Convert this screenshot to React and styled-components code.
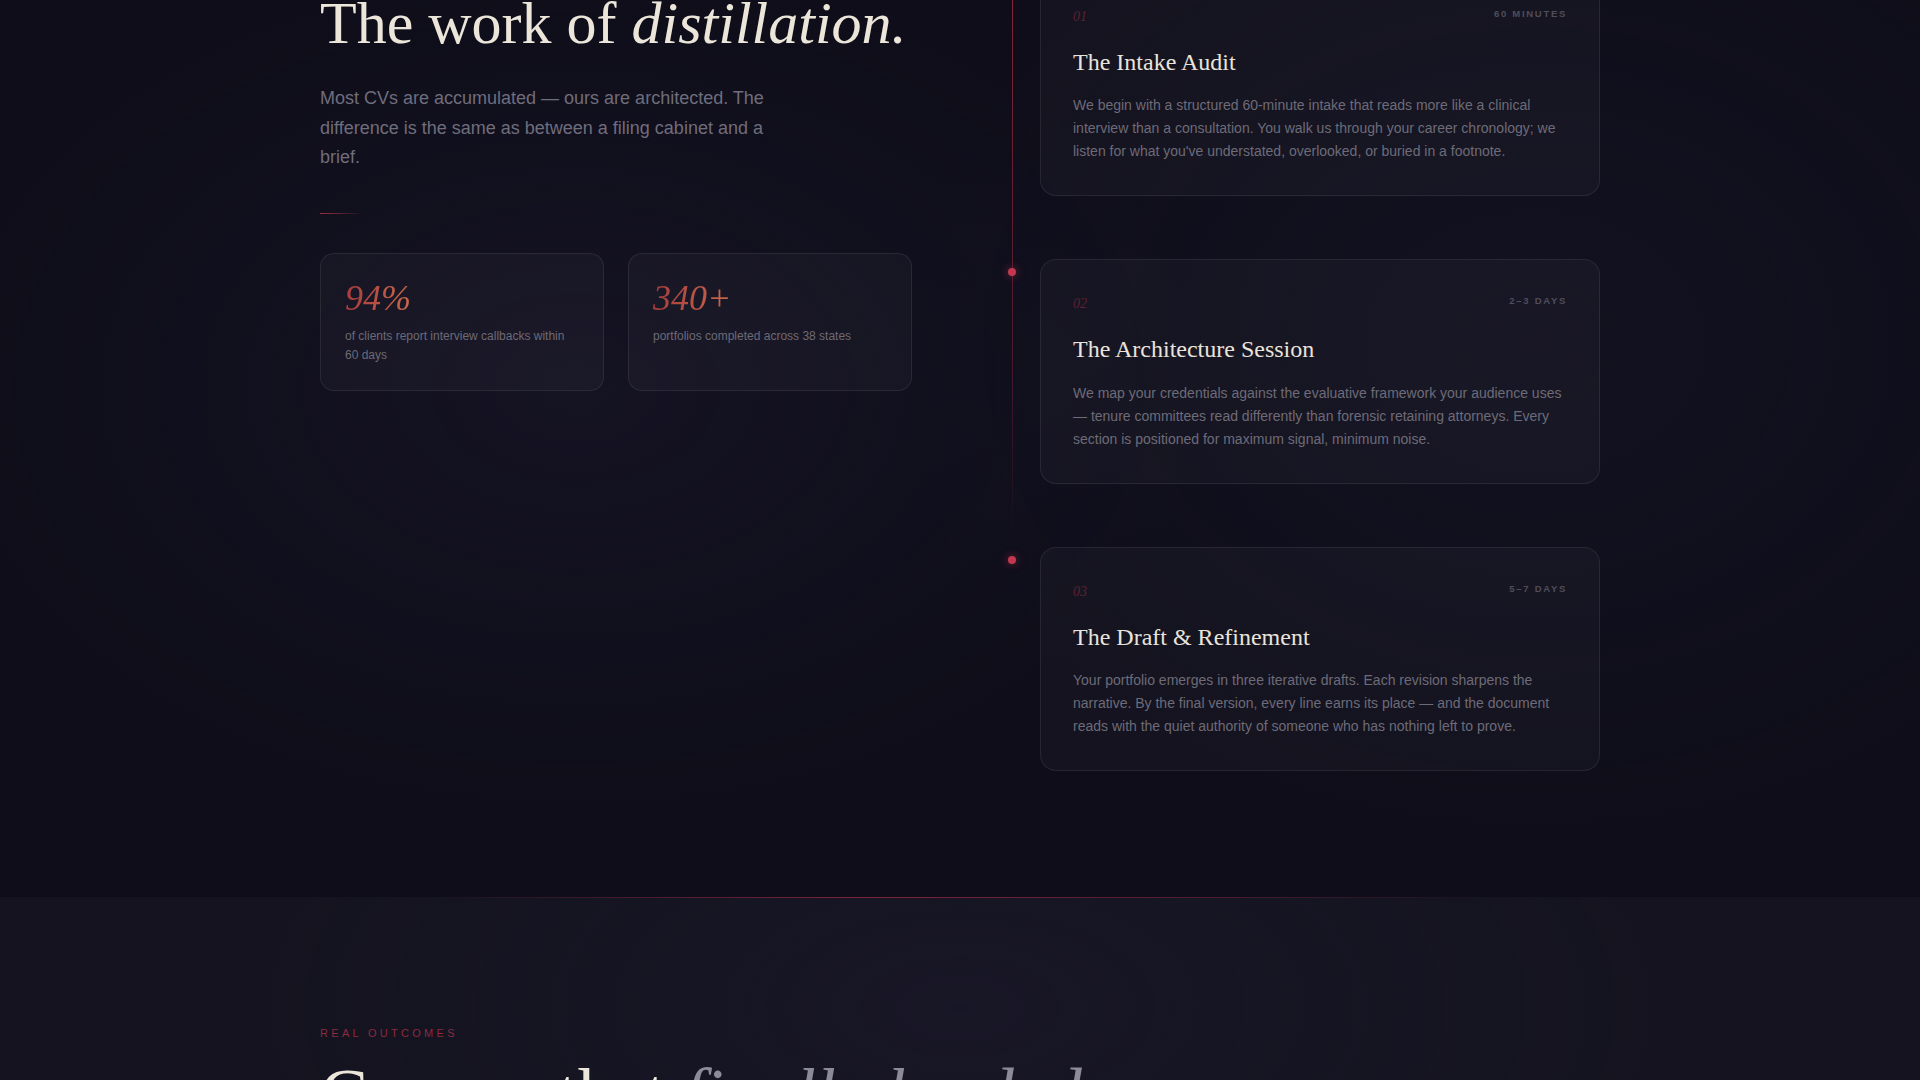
import React from 'react';
import styled, { createGlobalStyle } from 'styled-components';

const GlobalStyle = createGlobalStyle`
  * {
    box-sizing: border-box;
    margin: 0;
    padding: 0;
  }
  body {
    background: #0e0d19;
    font-family: "Liberation Sans", Arial, sans-serif;
    overflow: hidden;
  }
`

const Page = styled.div`
  min-height: 100vh;
  overflow: hidden;
`

const ProcessSection = styled.section`
  margin-top: -28px;
  padding-bottom: 126px;
  background:
    radial-gradient(ellipse 900px 600px at 30% 45%, rgba(34, 31, 52, 0.35), transparent 70%),
    radial-gradient(ellipse 900px 700px at 80% 40%, rgba(30, 28, 48, 0.3), transparent 70%),
    #0e0d19;
`

const Container = styled.div`
  width: 1280px;
  margin: 0 auto;
`

const ProcessGrid = styled(Container)`
  display: grid;
  grid-template-columns: 1fr 1fr;
  gap: 96px;
  align-items: start;
`

const Intro = styled.div`
  padding-top: 18px;
`

const Heading = styled.h2`
  font-family: "Liberation Serif", "Times New Roman", serif;
  font-weight: 400;
  font-size: ${p => p.$size || 60}px;
  line-height: 1.1;
  color: #ece6da;

  em {
    font-style: italic;
    color: ${p => p.$accent || '#ece6da'};
  }
`

const Lead = styled.p`
  margin-top: 28px;
  max-width: 470px;
  font-size: 18px;
  line-height: 1.65;
  color: #6f6d7c;
`

const Rule = styled.div`
  width: 44px;
  height: 1px;
  margin: 40px 0 39px;
  background: linear-gradient(90deg, #9a2f45, rgba(154, 47, 69, 0));
`

const Stats = styled.div`
  display: grid;
  grid-template-columns: 1fr 1fr;
  gap: 24px;
`

const Card = styled.div`
  background: rgba(255, 255, 255, 0.028);
  border: 1px solid rgba(255, 255, 255, 0.08);
  border-radius: ${p => p.$radius || 14}px;
  padding: ${p => p.$pad || '26px 24px 25px'};
`

const StatValue = styled.div`
  font-family: "Liberation Serif", "Times New Roman", serif;
  font-style: italic;
  font-size: 36px;
  line-height: 1;
  margin-bottom: 11px;
  background: linear-gradient(90deg, #a63c3e, #c8684a);
  -webkit-background-clip: text;
  background-clip: text;
  color: transparent;
  display: inline-block;
`

const StatLabel = styled.p`
  font-size: 12px;
  line-height: 1.6;
  color: #6c6a77;
`

const Timeline = styled.div`
  position: relative;
  display: flex;
  flex-direction: column;
  gap: 63px;
  padding-left: 32px;

  &::before {
    content: '';
    position: absolute;
    left: 4px;
    top: 0;
    bottom: 0;
    width: 1px;
    background: linear-gradient(
      to bottom,
      rgba(176, 44, 70, 0.75),
      rgba(150, 40, 64, 0.45) 48%,
      rgba(150, 40, 64, 0) 71%
    );
  }
`

const Step = styled.div`
  position: relative;
`

const Dot = styled.span`
  position: absolute;
  left: -32px;
  top: 9px;
  width: 8px;
  height: 8px;
  border-radius: 50%;
  background: #c3384f;
  box-shadow: 0 0 8px rgba(195, 56, 79, 0.6);
`

const StepHead = styled.div`
  display: flex;
  justify-content: space-between;
  align-items: flex-start;
  margin-bottom: 21px;
`

const StepNum = styled.span`
  font-family: "Liberation Serif", "Times New Roman", serif;
  font-style: italic;
  font-size: 14px;
  line-height: 19px;
  color: #5c2232;
`

const StepTime = styled.span`
  font-size: 9.5px;
  font-weight: 700;
  letter-spacing: 0.18em;
  text-transform: uppercase;
  line-height: 14px;
  color: #4f4d5b;
`

const StepTitle = styled.h3`
  font-family: "Liberation Serif", "Times New Roman", serif;
  font-weight: 400;
  font-size: 24px;
  line-height: 1.3;
  color: #e9e4db;
  margin-bottom: 16px;
`

const StepText = styled.p`
  font-size: 14px;
  line-height: 1.65;
  color: #6d6b78;
`

const OutcomesSection = styled.section`
  padding: 128px 0;
  background:
    radial-gradient(ellipse 1000px 500px at 50% 30%, rgba(30, 28, 48, 0.4), transparent 70%),
    #14131f;
  border-top: 1px solid;
  border-image: linear-gradient(90deg, rgba(150, 40, 64, 0) 22%, rgba(150, 40, 68, 0.8) 45%, rgba(150, 40, 68, 0.45) 62%, rgba(150, 40, 64, 0) 78%) 1;
`

const Eyebrow = styled.p`
  font-size: 11px;
  font-weight: 500;
  line-height: 1.4;
  letter-spacing: 0.3em;
  text-transform: uppercase;
  color: #8c2a3e;
  margin-bottom: 13px;
`

const stats = [
  { value: '94%', label: 'of clients report interview callbacks within 60 days' },
  { value: '340+', label: 'portfolios completed across 38 states' },
]

const steps = [
  {
    num: '01',
    time: '60 minutes',
    title: 'The Intake Audit',
    text: "We begin with a structured 60-minute intake that reads more like a clinical interview than a consultation. You walk us through your career chronology; we listen for what you've understated, overlooked, or buried in a footnote.",
  },
  {
    num: '02',
    time: '2–3 days',
    title: 'The Architecture Session',
    text: 'We map your credentials against the evaluative framework your audience uses — tenure committees read differently than forensic retaining attorneys. Every section is positioned for maximum signal, minimum noise.',
  },
  {
    num: '03',
    time: '5–7 days',
    title: 'The Draft & Refinement',
    text: 'Your portfolio emerges in three iterative drafts. Each revision sharpens the narrative. By the final version, every line earns its place — and the document reads with the quiet authority of someone who has nothing left to prove.',
  },
]

export default function App() {
  return (
    <Page>
      <GlobalStyle />
      <ProcessSection>
        <ProcessGrid>
          <Intro>
            <Heading>The work of <em>distillation.</em></Heading>
            <Lead>
              Most CVs are accumulated — ours are architected. The difference is the same as between a filing cabinet and a brief.
            </Lead>
            <Rule />
            <Stats>
              {stats.map(s => (
                <Card key={s.value}>
                  <StatValue>{s.value}</StatValue>
                  <StatLabel>{s.label}</StatLabel>
                </Card>
              ))}
            </Stats>
          </Intro>

          <Timeline>
            {steps.map(step => (
              <Step key={step.num}>
                <Dot />
                <Card $pad="34px 32px 32px" $radius={16}>
                  <StepHead>
                    <StepNum>{step.num}</StepNum>
                    <StepTime>{step.time}</StepTime>
                  </StepHead>
                  <StepTitle>{step.title}</StepTitle>
                  <StepText>{step.text}</StepText>
                </Card>
              </Step>
            ))}
          </Timeline>
        </ProcessGrid>
      </ProcessSection>

      <OutcomesSection>
        <Container>
          <Eyebrow>Real outcomes</Eyebrow>
          <Heading $size={72} $accent="#8d8a99">Careers that <em>finally landed.</em></Heading>
        </Container>
      </OutcomesSection>
    </Page>
  );
}
